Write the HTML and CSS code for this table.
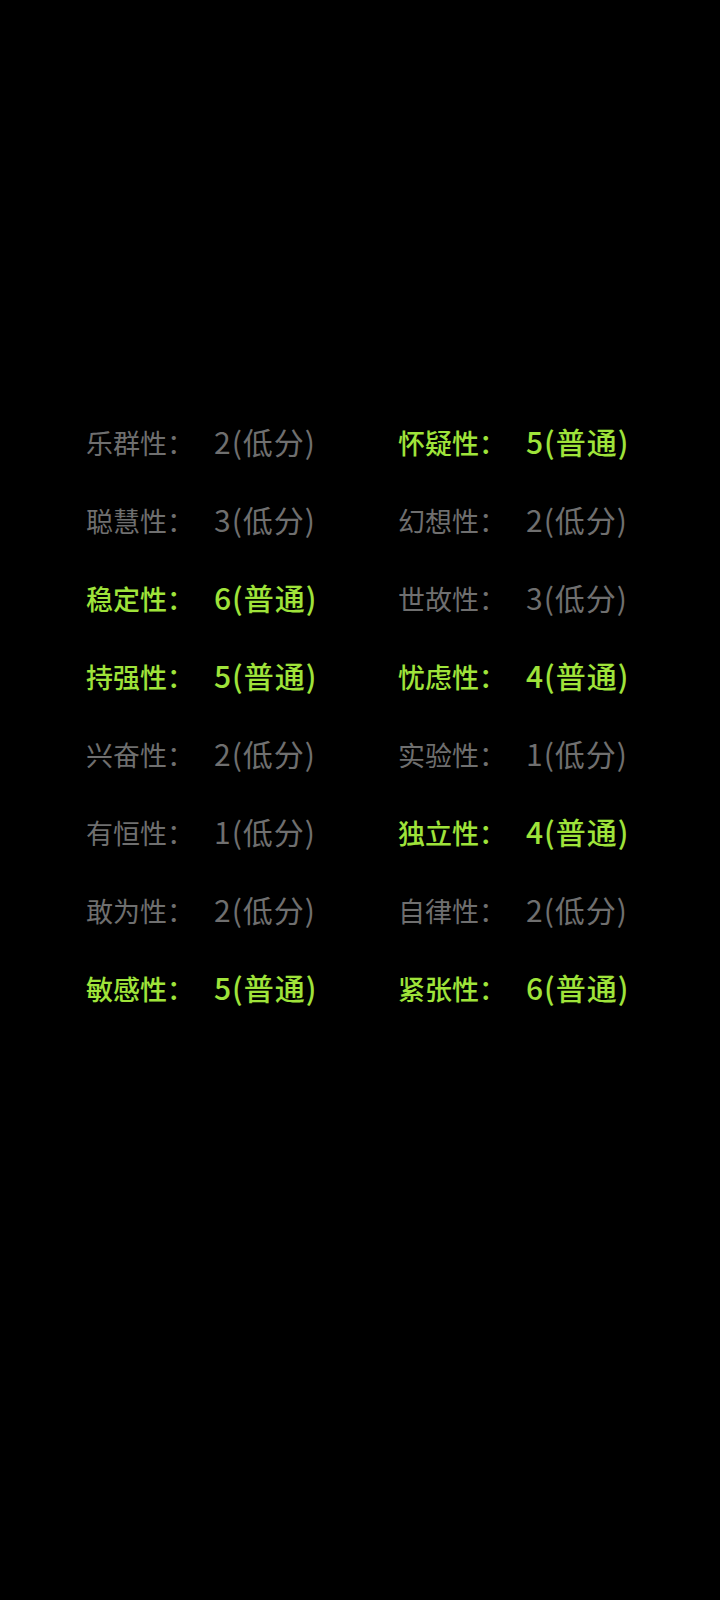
FILE: index.html
```html
<!DOCTYPE html>
<html lang="zh-CN">
<head>
<meta charset="utf-8">
<link rel="stylesheet" href="styles.css">
</head>
<body>
<div class="grid">
  <div class="item low"><span class="k">乐群性：</span><span class="v">2(低分)</span></div>
  <div class="item mid"><span class="k">怀疑性：</span><span class="v">5(普通)</span></div>
  <div class="item low"><span class="k">聪慧性：</span><span class="v">3(低分)</span></div>
  <div class="item low"><span class="k">幻想性：</span><span class="v">2(低分)</span></div>
  <div class="item mid"><span class="k">稳定性：</span><span class="v">6(普通)</span></div>
  <div class="item low"><span class="k">世故性：</span><span class="v">3(低分)</span></div>
  <div class="item mid"><span class="k">持强性：</span><span class="v">5(普通)</span></div>
  <div class="item mid"><span class="k">忧虑性：</span><span class="v">4(普通)</span></div>
  <div class="item low"><span class="k">兴奋性：</span><span class="v">2(低分)</span></div>
  <div class="item low"><span class="k">实验性：</span><span class="v">1(低分)</span></div>
  <div class="item low"><span class="k">有恒性：</span><span class="v">1(低分)</span></div>
  <div class="item mid"><span class="k">独立性：</span><span class="v">4(普通)</span></div>
  <div class="item low"><span class="k">敢为性：</span><span class="v">2(低分)</span></div>
  <div class="item low"><span class="k">自律性：</span><span class="v">2(低分)</span></div>
  <div class="item mid"><span class="k">敏感性：</span><span class="v">5(普通)</span></div>
  <div class="item mid"><span class="k">紧张性：</span><span class="v">6(普通)</span></div>
</div>
</body>
</html>
```
FILE: styles.css
```css
html, body {
  margin: 0;
  padding: 0;
  background: #000;
}
body {
  width: 720px;
  height: 1600px;
  font-family: "Noto Sans CJK SC", "Noto Sans", sans-serif;
}
.grid {
  display: grid;
  grid-template-columns: 312px 312px;
  padding: 402px 0 0 86px;
}
.item {
  line-height: 78px;
  height: 78px;
  white-space: nowrap;
}
.k {
  font-size: 27px;
}
.v {
  font-size: 30px;
  letter-spacing: 1px;
  margin-left: 20px;
}
.low {
  color: #6f6f6f;
}
.mid {
  color: #9fe33a;
  font-weight: 500;
}
```
